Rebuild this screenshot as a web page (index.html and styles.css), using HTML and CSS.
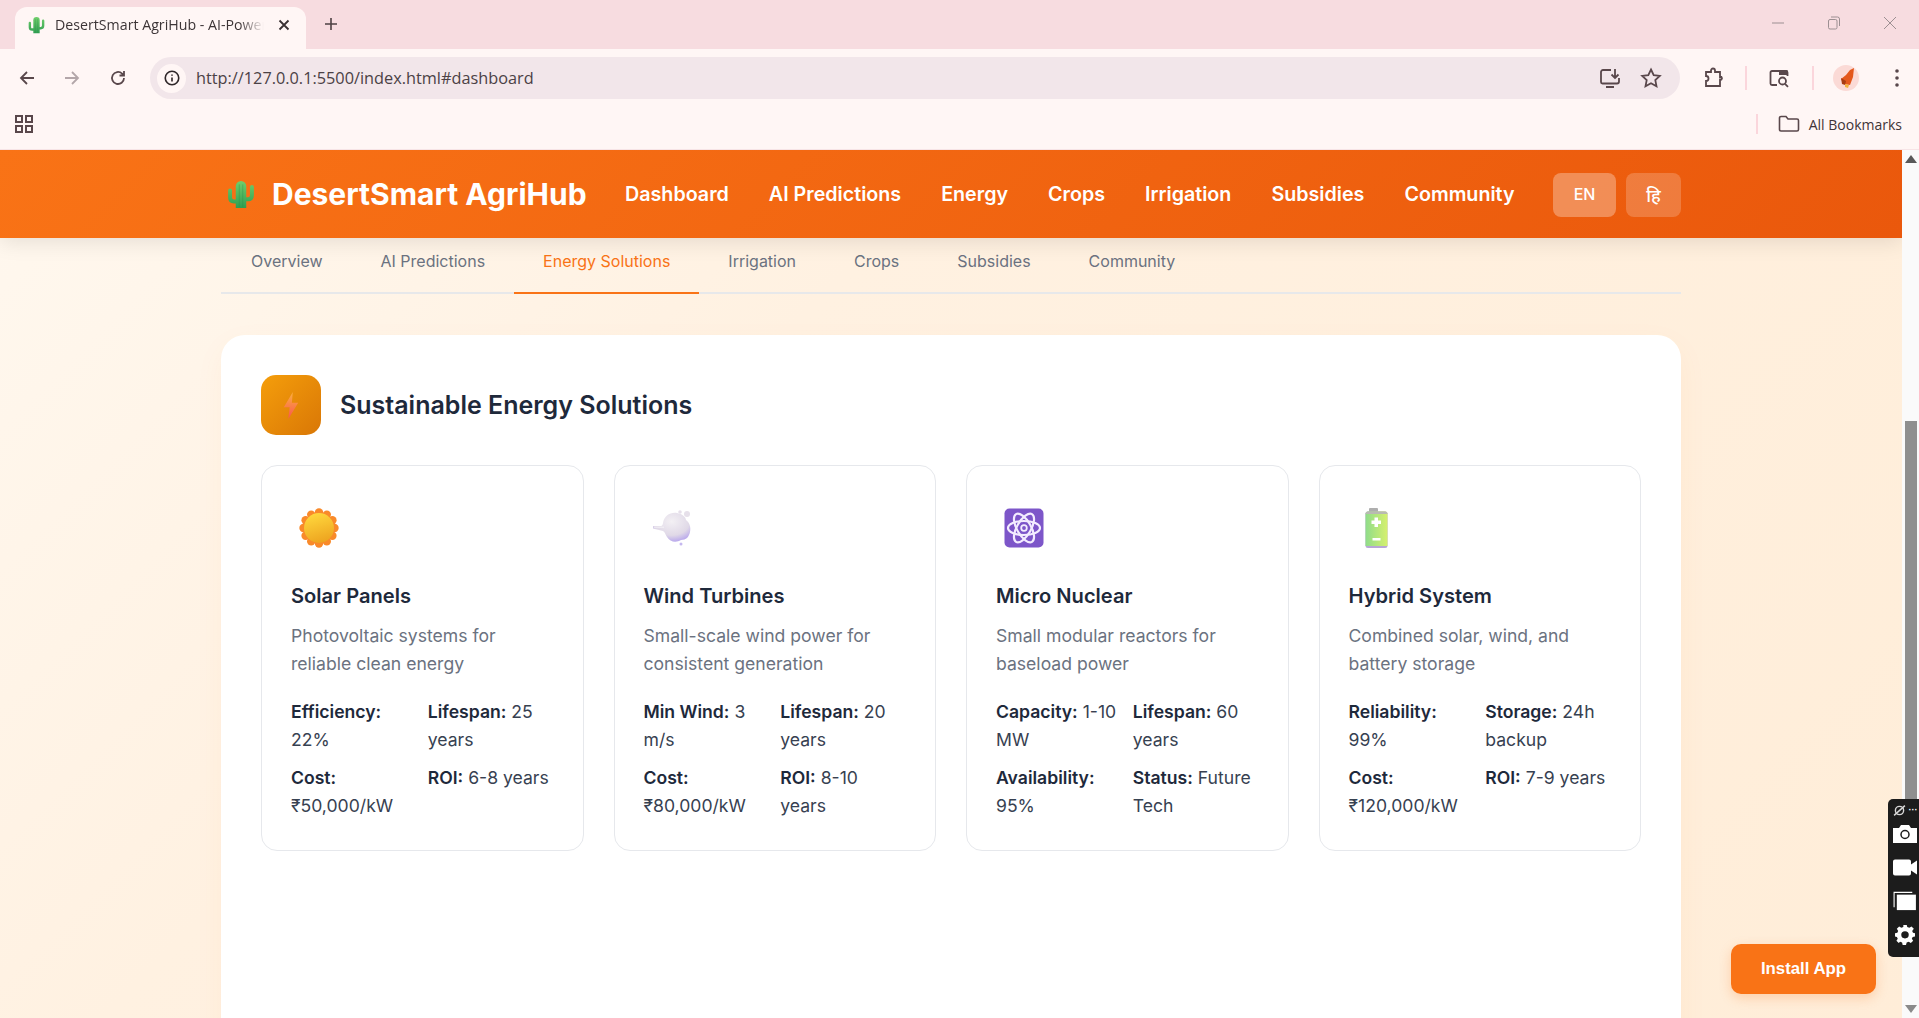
FILE: index.html
```html
<!DOCTYPE html>
<html lang="en">
<head>
<meta charset="utf-8">
<title>DesertSmart AgriHub</title>
<link rel="stylesheet" href="styles.css">
</head>
<body>
<svg class="defs" width="0" height="0">
  <defs>
    <linearGradient id="gCactus" gradientUnits="userSpaceOnUse" x1="0" y1="0" x2="0" y2="32"><stop offset="0" stop-color="#72d06c"/><stop offset="1" stop-color="#2f9e52"/></linearGradient>
    <linearGradient id="gBolt" x1="0.5" y1="0" x2="0.5" y2="1"><stop offset="0" stop-color="#fbb040"/><stop offset="1" stop-color="#f9564f"/></linearGradient>
    <linearGradient id="gSun" x1="0.3" y1="0" x2="0.6" y2="1"><stop offset="0" stop-color="#ffd83d"/><stop offset="1" stop-color="#eda31f"/></linearGradient>
    <linearGradient id="gBat" x1="0" y1="0" x2="1" y2="0"><stop offset="0" stop-color="#8fdc8a"/><stop offset="1" stop-color="#d6f06e"/></linearGradient>
    <radialGradient id="gWind" cx="0.5" cy="0.3" r="0.8"><stop offset="0" stop-color="#f3f0f4"/><stop offset="0.6" stop-color="#e0d9e7"/><stop offset="1" stop-color="#a994ee"/></radialGradient>
    <symbol id="cactus" viewBox="0 0 32 32">
      <g fill="none" stroke="url(#gCactus)" stroke-width="4.500" stroke-linecap="round">
        <path d="M3.500 12v8q0 4.500 4.500 4.500h4"/>
        <path d="M28.500 8v9q0 5-4.500 5h-4"/>
      </g>
      <path d="M10 7a6 6 0 0 1 12 0v25H10z" fill="url(#gCactus)"/>
      <path d="M14 5v26M18 5v26" stroke="#2a8a49" stroke-width=".8" opacity=".55"/>
    </symbol>
  </defs>
</svg>

<div class="tabstrip">
  <div class="tab">
    <svg class="fav" viewBox="0 0 32 32"><use href="#cactus"/></svg>
    <span class="tab-title">DesertSmart AgriHub - AI-Powered Desert Agri</span>
    <svg class="tab-x" viewBox="0 0 12 12"><path d="M1.500 1.500l9 9M10.500 1.500l-9 9"/></svg>
  </div>
  <svg class="newtab" viewBox="0 0 14 14"><path d="M7 1v12M1 7h12"/></svg>
  <div class="winctl">
    <svg viewBox="0 0 14 14"><path d="M1 7h12"/></svg>
    <svg viewBox="0 0 14 14"><rect x="1.500" y="3.500" width="8.500" height="9.500" rx="1.500"/><path d="M4 1h6.500a2 2 0 0 1 2 2v7"/></svg>
    <svg viewBox="0 0 14 14"><path d="M1 1l12 12M13 1L1 13"/></svg>
  </div>
</div>

<div class="toolbar">
  <svg class="tb back" viewBox="0 0 20 20"><path d="M17 10H4M10 4l-6 6 6 6"/></svg>
  <svg class="tb fwd" viewBox="0 0 20 20"><path d="M3 10h13M10 4l6 6-6 6"/></svg>
  <svg class="tb reload" viewBox="0 0 20 20"><path d="M16 10a6 6 0 1 1-1.900-4.400L16 7.500M16 3v4.500h-4.500"/></svg>
  <div class="omnibox">
    <span class="site-info">
      <svg viewBox="0 0 20 20"><circle cx="10" cy="10" r="7.500"/><path d="M10 9.500v4.500M10 6v1.500"/></svg>
    </span>
    <span class="url">http://127.0.0.1:5500/index.html#dashboard</span>
    <svg class="tb install" viewBox="0 0 24 24"><path d="M13 4H5a2 2 0 0 0-2 2v10a1.500 1.500 0 0 0 1.500 1.500H19a2 2 0 0 0 2-2V12M17 3v9M13.500 8.500L17 12l3.500-3.500M8 21h8"/></svg>
    <svg class="tb star" viewBox="0 0 24 24"><path d="M12 3.500l2.700 5.600 6.100.8-4.500 4.200 1.200 6.100L12 17.200l-5.500 3 1.200-6.100-4.500-4.200 6.100-.8z"/></svg>
  </div>
  <svg class="tb ext" viewBox="0 0 24 24"><path d="M5 6h5V4.500a2 2 0 0 1 4 0V6h5v5h1.500a2 2 0 0 1 0 2.500H19V20H5v-5a2.500 2.500 0 0 0 0-5z"/></svg>
  <i class="vsep first"></i>
  <svg class="tb lens" viewBox="0 0 24 24"><path d="M10 19H5a1.500 1.500 0 0 1-1.500-1.500V6.500A1.500 1.500 0 0 1 5 5h14a1.500 1.500 0 0 1 1.500 1.500V10"/><path class="solid" d="M12 4h7a2 2 0 0 1 2 2v3h-9z"/><circle cx="15.500" cy="15" r="3.500"/><path d="M18 17.800l3 3"/></svg>
  <i class="vsep"></i>
  <span class="avatar"><svg viewBox="0 0 26 26"><path d="M17 5l4-2-1 9-3 8-6-1-3-5 5-4z" fill="#e4581c"/><path d="M8 13l5 3-1 4-3-1z" fill="#a83c12"/><path d="M12 19l4 1-1 3-3-1z" fill="#f2b13c"/></svg></span>
  <svg class="tb dots" viewBox="0 0 6 20"><circle cx="3" cy="3" r="1.800"/><circle cx="3" cy="10" r="1.800"/><circle cx="3" cy="17" r="1.800"/></svg>
</div>

<div class="bookmarks">
  <svg class="apps" viewBox="0 0 18 18"><path d="M1 1h6v6H1zM11 1h6v6h-6zM1 11h6v6H1zM11 11h6v6h-6z"/></svg>
  <i class="vsep bm"></i>
  <svg class="folder" viewBox="0 0 22 18"><path d="M1.500 3a1.500 1.500 0 0 1 1.500-1.500h5l2 2.500h9A1.500 1.500 0 0 1 20.500 5.500v9a1.500 1.500 0 0 1-1.500 1.500H3A1.500 1.500 0 0 1 1.500 14.500z"/></svg>
  <span class="bm-text">All Bookmarks</span>
</div>

<div class="viewport">
  <div class="page">
    <header class="site-header">
      <div class="container header-row">
        <div class="logo">
          <svg class="logo-icon" viewBox="0 0 32 32"><use href="#cactus"/></svg>
          <span>DesertSmart AgriHub</span>
        </div>
        <nav class="main-nav">
          <a>Dashboard</a><a>AI Predictions</a><a>Energy</a><a>Crops</a><a>Irrigation</a><a>Subsidies</a><a>Community</a>
        </nav>
        <div class="lang">
          <span class="lang-btn en">EN</span>
          <span class="lang-btn hi">हि</span>
        </div>
      </div>
    </header>

    <main class="container">
      <div class="tabs">
        <span class="t">Overview</span>
        <span class="t">AI Predictions</span>
        <span class="t active">Energy Solutions</span>
        <span class="t">Irrigation</span>
        <span class="t">Crops</span>
        <span class="t">Subsidies</span>
        <span class="t">Community</span>
      </div>

      <section class="panel">
        <div class="panel-head">
          <span class="panel-icon">
            <svg viewBox="0 0 20 32"><path d="M12 1L2 18h6.500L7 31l11-18h-7z" fill="url(#gBolt)"/></svg>
          </span>
          <h2>Sustainable Energy Solutions</h2>
        </div>

        <div class="grid">
          <article class="card">
            <svg class="card-icon" viewBox="0 0 40 40">
              <g fill="#f98a2a">
                <circle cx="20" cy="4.500" r="4.200"/><circle cx="27.800" cy="6.600" r="4.200"/><circle cx="33.400" cy="12.200" r="4.200"/>
                <circle cx="35.500" cy="20" r="4.200"/><circle cx="33.400" cy="27.800" r="4.200"/><circle cx="27.800" cy="33.400" r="4.200"/>
                <circle cx="20" cy="35.500" r="4.200"/><circle cx="12.200" cy="33.400" r="4.200"/><circle cx="6.600" cy="27.800" r="4.200"/>
                <circle cx="4.500" cy="20" r="4.200"/><circle cx="6.600" cy="12.200" r="4.200"/><circle cx="12.200" cy="6.600" r="4.200"/>
                <circle cx="20" cy="20" r="15"/>
              </g>
              <circle cx="20" cy="20" r="15" fill="url(#gSun)"/>
            </svg>
            <h3>Solar Panels</h3>
            <p class="desc">Photovoltaic systems for reliable clean energy</p>
            <div class="specs">
              <div><b>Efficiency:</b> 22%</div>
              <div><b>Lifespan:</b> 25 years</div>
              <div><b>Cost:</b> ₹50,000/kW</div>
              <div><b>ROI:</b> 6-8 years</div>
            </div>
          </article>

          <article class="card">
            <svg class="card-icon" viewBox="0 0 40 40">
              <circle cx="28" cy="4" r="1.800" fill="#e6dfea"/>
              <circle cx="35" cy="6" r="3" fill="#e6e0ea"/>
              <circle cx="29" cy="36" r="1.500" fill="#c5b8ef"/>
              <path d="M11 15C12 8 18 4 25 5c5 1 9 4 9 7 4 3 5 8 4 12-1 5-4 8-9 8-5 3-11 2-14-3-2-3-2-5-4-6L1 20.500V18h8c1 0 2-2 2-3z" fill="url(#gWind)"/>
              <path d="M2 19.200h10" stroke="#fff" stroke-width=".7" opacity=".8"/>
            </svg>
            <h3>Wind Turbines</h3>
            <p class="desc">Small-scale wind power for consistent generation</p>
            <div class="specs">
              <div><b>Min Wind:</b> 3 m/s</div>
              <div><b>Lifespan:</b> 20 years</div>
              <div><b>Cost:</b> ₹80,000/kW</div>
              <div><b>ROI:</b> 8-10 years</div>
            </div>
          </article>

          <article class="card">
            <svg class="card-icon" viewBox="0 0 40 40">
              <rect x="0.500" y="0.500" width="39" height="39" rx="5" fill="#7d56c9"/>
              <g fill="none" stroke="#f3ecff" stroke-width="2.200">
                <ellipse cx="20" cy="20" rx="16" ry="7"/>
                <ellipse cx="20" cy="20" rx="16" ry="7" transform="rotate(60 20 20)"/>
                <ellipse cx="20" cy="20" rx="16" ry="7" transform="rotate(-60 20 20)"/>
              </g>
              <circle cx="20" cy="20" r="2.800" fill="#7d56c9" stroke="#f3ecff" stroke-width="1.800"/>
            </svg>
            <h3>Micro Nuclear</h3>
            <p class="desc">Small modular reactors for baseload power</p>
            <div class="specs">
              <div><b>Capacity:</b> 1-10 MW</div>
              <div><b>Lifespan:</b> 60 years</div>
              <div><b>Availability:</b> 95%</div>
              <div><b>Status:</b> Future Tech</div>
            </div>
          </article>

          <article class="card">
            <svg class="card-icon" viewBox="0 0 40 40">
              <rect x="12" y="0" width="9" height="4.500" rx="1" fill="#aeaeae"/>
              <rect x="8.500" y="3.500" width="22" height="36.500" rx="2.500" fill="#b7a6d6"/>
              <path d="M8.500 6a2.500 2.500 0 0 1 2.500-2.500h17a2.500 2.500 0 0 1 2.500 2.500v32H8.500z" fill="url(#gBat)"/>
              <path d="M8.500 6a2.500 2.500 0 0 1 2.500-2.500h17a2.500 2.500 0 0 1 2.500 2.500H8.500z" fill="#b9bab2"/>
              <path d="M17.500 9.500h3.500v3h3v3.500h-3v3h-3.500v-3h-3v-3.500h3zM15.500 30h8v2.500h-8z" fill="#fff"/>
            </svg>
            <h3>Hybrid System</h3>
            <p class="desc">Combined solar, wind, and battery storage</p>
            <div class="specs">
              <div><b>Reliability:</b> 99%</div>
              <div><b>Storage:</b> 24h backup</div>
              <div><b>Cost:</b> ₹120,000/kW</div>
              <div><b>ROI:</b> 7-9 years</div>
            </div>
          </article>
        </div>
      </section>
    </main>
  </div>

  <div class="scrollbar">
    <span class="arrow up"></span>
    <span class="thumb"></span>
    <span class="arrow down"></span>
  </div>

  <span class="install-app">Install App</span>

  <div class="capture">
    <div class="cap-top">
      <svg viewBox="0 0 12 12"><circle cx="6" cy="6" r="3.800"/><path d="M1 10.500L11 1.500"/></svg>
      <span>···</span>
    </div>
    <svg viewBox="0 0 26 20"><path d="M1 5h6l2-3h8l2 3h6v15H1z" fill="#fff"/><circle cx="13" cy="11.500" r="4" fill="none" stroke="#1c1c1c" stroke-width="1.500"/></svg>
    <svg viewBox="0 0 26 20"><path d="M1 4.500a2 2 0 0 1 2-2h14a2 2 0 0 1 2 2v3l6-4v14l-6-4v3a2 2 0 0 1-2 2H3a2 2 0 0 1-2-2z" fill="#fff"/></svg>
    <svg viewBox="0 0 26 22"><path d="M4 4h21v17H4z" fill="#fff"/><path d="M1 18V1.500h20" fill="none" stroke="#fff" stroke-width="1.200"/></svg>
    <svg viewBox="0 0 24 24"><path fill-rule="evenodd" d="M10 1h4l.7 3 2.500 1 2.600-1.600 2.800 2.800L20.600 9l1 2.400 2.400.6v4l-2.800.6-1 2.300 1.600 2.700-2.800 2.800-2.600-1.600-2.400 1-.8 3h-4l-.7-3-2.400-1L4.500 24.400 1.700 21.600l1.600-2.700-1-2.300L0 16v-4l2.800-.6 1-2.400-1.600-2.800L5 3.400l2.600 1.600L10 4zM12 9.500a4.500 4.500 0 1 0 0 9 4.500 4.500 0 0 0 0-9z" transform="translate(0 -1.500) scale(1 .95)" fill="#fff"/></svg>
  </div>
</div>
</body>
</html>
```

FILE: styles.css
```css
* { box-sizing: border-box; }
html, body { margin: 0; height: 100%; }
body {
  height: 1018px;
  overflow: hidden;
  display: flex;
  flex-direction: column;
  font-family: Inter, "Noto Sans", sans-serif;
  background: #fff6f5;
  position: relative;
}
.defs { position: absolute; }

/* browser chrome */
.tabstrip {
  height: 49px;
  flex: none;
  background: #f7dce0;
  display: flex;
  align-items: flex-end;
  padding-left: 15px;
}
.tab {
  width: 291px;
  height: 42px;
  background: #fff6f5;
  border-radius: 12px 12px 0 0;
  display: flex;
  align-items: center;
  padding: 0 16px 7px 13px;
  position: relative;
}
.fav { width: 17px; height: 20px; flex: none; margin-right: 10px; }
.tab-title {
  font: 400 14.200px "Open Sans", sans-serif;
  color: #3c3436;
  white-space: nowrap;
  overflow: hidden;
  flex: 1;
  -webkit-mask-image: linear-gradient(90deg, #000 88%, transparent 100%);
  mask-image: linear-gradient(90deg, #000 88%, transparent 100%);
}
.tab-x { width: 12px; height: 12px; margin-left: 14px; flex: none; fill: none; stroke: #3a3033; stroke-width: 1.800; }
.newtab { width: 14px; height: 14px; margin: 0 0 18px 18px; fill: none; stroke: #4d4043; stroke-width: 1.600; }
.winctl { margin-left: auto; display: flex; gap: 42px; align-self: flex-start; padding: 16px 22px 0 0; }
.winctl svg { width: 14px; height: 14px; fill: none; stroke: #9c8f92; stroke-width: 1; }

.toolbar {
  height: 50px;
  flex: none;
  display: flex;
  align-items: center;
  padding: 8px 18px 0 17px;
  background: #fff6f5;
}
.tb { width: 20px; height: 20px; flex: none; fill: none; stroke: #59474b; stroke-width: 1.800; }
.fwd { margin-left: 25px; stroke: #b3a6a9; }
.reload { margin-left: 26px; }
.omnibox {
  width: 1530px;
  margin-left: 22px;
  height: 42px;
  border-radius: 21px;
  background: #f2e6ea;
  display: flex;
  align-items: center;
  padding: 0 17px 0 7px;
}
.site-info {
  width: 29px;
  height: 29px;
  border-radius: 50%;
  background: #fff6f5;
  display: flex;
  align-items: center;
  justify-content: center;
  flex: none;
}
.site-info svg { width: 18px; height: 18px; fill: none; stroke: #2f2729; stroke-width: 1.800; }
.url { margin-left: 10px; font: 400 16.300px "Open Sans", sans-serif; color: #4b4145; flex: 1; }
.install { width: 24px; height: 24px; }
.star { width: 24px; height: 24px; margin-left: 17px; }
.ext { width: 24px; height: 24px; margin-left: 21px; }
.vsep { width: 2px; height: 24px; background: #fbd6dc; flex: none; margin-left: 20px; }
.lens { width: 24px; height: 24px; margin-left: 20px; }
.lens .solid { fill: #59474b; stroke: none; }
.toolbar .vsep:not(.first) { margin-left: 21px; }
.avatar { width: 26px; height: 26px; border-radius: 50%; background: #fbdad6; margin-left: 19px; flex: none; display: block; }
.avatar svg { display: block; width: 26px; height: 26px; }
.dots { width: 6px; height: 20px; margin-left: 35px; fill: #59474b; stroke: none; }

.bookmarks {
  height: 51px;
  flex: none;
  display: flex;
  align-items: center;
  padding: 0 17px 0 15px;
  background: #fff6f5;
  border-bottom: 1px solid #f7e4e6;
}
.apps { width: 18px; height: 18px; fill: none; stroke: #59474b; stroke-width: 2; }
.vsep.bm { margin-left: auto; height: 20px; }
.folder { width: 22px; height: 18px; margin-left: 20px; fill: none; stroke: #59474b; stroke-width: 1.600; }
.bm-text { margin-left: 9px; font: 400 14px "Open Sans", sans-serif; color: #3f3437; }

.viewport { flex: 1; min-height: 0; display: flex; position: relative; }
.page {
  flex: 1;
  min-width: 0;
  overflow: hidden;
  background: linear-gradient(135deg, #fff8ef 0%, #fff1e1 35%, #ffedd8 100%);
}
.scrollbar { width: 17px; flex: none; background: #fafafa; display: flex; flex-direction: column; align-items: center; }
.arrow { width: 0; height: 0; border-left: 6px solid transparent; border-right: 6px solid transparent; flex: none; }
.arrow.up { border-bottom: 8px solid #595959; margin-top: 5px; }
.arrow.down { border-top: 8px solid #8a8a8a; margin-top: auto; margin-bottom: 5px; }
.thumb { width: 12px; height: 480px; background: #8f8f8f; margin-top: 258px; flex: none; }

.container { width: 1460px; margin: 0 auto; }

/* site header */
.site-header {
  height: 88px;
  background: linear-gradient(135deg, #f97316, #ea580c);
  box-shadow: 0 4px 20px rgba(0, 0, 0, .1);
  position: relative;
}
.header-row { height: 100%; display: flex; align-items: center; justify-content: space-between; }
.logo { display: flex; align-items: center; gap: 17px; padding-left: 6px; color: #fff; font-size: 30px; font-weight: 700; }
.logo-icon { width: 28px; height: 30px; }
.main-nav { display: flex; gap: 40px; }
.main-nav a { color: #fff; font-size: 19.700px; font-weight: 600; }
.lang { display: flex; gap: 10px; padding-top: 2px; }
.lang-btn {
  height: 44px;
  border-radius: 8px;
  display: flex;
  align-items: center;
  justify-content: center;
  color: #fff;
  font: 500 16px Inter, "Noto Sans", "DejaVu Sans", sans-serif;
}
.en { width: 63px; padding-bottom: 2px; background: rgba(255, 255, 255, .3); }
.hi { width: 55px; background: rgba(255, 255, 255, .2); font-size: 18px; }

/* tabs */
.tabs { display: flex; height: 56px; padding-left: 1px; border-bottom: 2px solid #e7e8ea; }
.t {
  height: 56px;
  padding: 0 29px 10px;
  display: flex;
  align-items: center;
  font-size: 16px;
  font-weight: 400;
  color: #6b7280;
}
.t.active { color: #f97316; border-bottom: 2px solid #f97316; padding-bottom: 8px; }

/* panel */
.panel {
  margin-top: 41px;
  background: #fff;
  border-radius: 24px;
  padding: 40px;
  height: 900px;
  box-shadow: 0 10px 30px rgba(249, 115, 22, .05);
}
.panel-head { display: flex; align-items: center; gap: 19px; margin-bottom: 30px; }
.panel-icon {
  width: 60px;
  height: 60px;
  border-radius: 15px;
  background: linear-gradient(135deg, #f59e0b, #d97706);
  display: flex;
  align-items: center;
  justify-content: center;
}
.panel-icon svg { width: 18px; height: 29px; }
.panel-head h2 { margin: 0; font-size: 25px; font-weight: 600; color: #1e293b; }
.grid { display: grid; grid-template-columns: repeat(4, 1fr); gap: 30px; }
.card {
  border: 1px solid #e6e8ec;
  border-radius: 16px;
  padding: 30px 30px 29px 29px;
  height: 386px;
}
.card-icon { display: block; width: 40px; height: 40px; margin-left: 8px; margin-top: 12px; }
.card h3 { margin: 33px 0 0; font-size: 20.100px; font-weight: 600; line-height: 30px; color: #1e293b; }
.desc { margin: 11px 0 0; font-size: 17.600px; line-height: 28px; color: #6b7280; }
.specs { margin-top: 20px; display: grid; grid-template-columns: 1fr 1fr; gap: 10px 12px; font-size: 17.600px; line-height: 28px; color: #374151; }
.specs b { font-weight: 600; color: #1e293b; }

/* overlays */
.install-app {
  position: absolute;
  left: 1731px;
  top: 794px;
  width: 145px;
  height: 50px;
  border-radius: 10px;
  background: #f97316;
  color: #fff;
  display: flex;
  align-items: center;
  justify-content: center;
  font: 700 16.800px "Liberation Sans", sans-serif;
  box-shadow: 0 4px 12px rgba(249, 115, 22, .25);
}
.capture {
  position: absolute;
  left: 1888px;
  top: 649px;
  width: 31px;
  height: 158px;
  background: #1c1c1c;
  border-radius: 5px 0 0 5px;
  display: flex;
  flex-direction: column;
  align-items: center;
  padding: 4px 0 0 3px;
  gap: 14px;
}
.capture > svg { width: 26px; height: 20px; flex: none; }
.cap-top { display: flex; align-items: center; gap: 3px; height: 14px; margin-bottom: -8px; color: #fff; font: 700 9px "Liberation Sans", sans-serif; }
.cap-top svg { width: 13px; height: 13px; fill: none; stroke: #d8d8d8; stroke-width: 1.300; }
```
